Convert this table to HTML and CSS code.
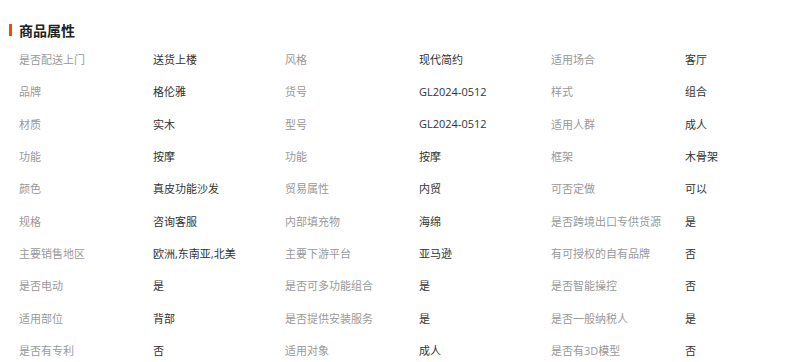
FILE: index.html
```html
<!DOCTYPE html>
<html lang="zh">
<head>
<meta charset="utf-8">
<title>商品属性</title>
<link rel="stylesheet" href="styles.css">
</head>
<body>
<section class="attrs">
  <h3 class="attrs-title">商品属性</h3>
  <div class="attrs-grid">
    <span class="k">是否配送上门</span><span class="v">送货上楼</span>
    <span class="k">风格</span><span class="v">现代简约</span>
    <span class="k">适用场合</span><span class="v">客厅</span>

    <span class="k">品牌</span><span class="v">格伦雅</span>
    <span class="k">货号</span><span class="v">GL2024-0512</span>
    <span class="k">样式</span><span class="v">组合</span>

    <span class="k">材质</span><span class="v">实木</span>
    <span class="k">型号</span><span class="v">GL2024-0512</span>
    <span class="k">适用人群</span><span class="v">成人</span>

    <span class="k">功能</span><span class="v">按摩</span>
    <span class="k">功能</span><span class="v">按摩</span>
    <span class="k">框架</span><span class="v">木骨架</span>

    <span class="k">颜色</span><span class="v">真皮功能沙发</span>
    <span class="k">贸易属性</span><span class="v">内贸</span>
    <span class="k">可否定做</span><span class="v">可以</span>

    <span class="k">规格</span><span class="v">咨询客服</span>
    <span class="k">内部填充物</span><span class="v">海绵</span>
    <span class="k">是否跨境出口专供货源</span><span class="v">是</span>

    <span class="k">主要销售地区</span><span class="v">欧洲,东南亚,北美</span>
    <span class="k">主要下游平台</span><span class="v">亚马逊</span>
    <span class="k">有可授权的自有品牌</span><span class="v">否</span>

    <span class="k">是否电动</span><span class="v">是</span>
    <span class="k">是否可多功能组合</span><span class="v">是</span>
    <span class="k">是否智能操控</span><span class="v">否</span>

    <span class="k">适用部位</span><span class="v">背部</span>
    <span class="k">是否提供安装服务</span><span class="v">是</span>
    <span class="k">是否一般纳税人</span><span class="v">是</span>

    <span class="k">是否有专利</span><span class="v">否</span>
    <span class="k">适用对象</span><span class="v">成人</span>
    <span class="k">是否有3D模型</span><span class="v">否</span>
  </div>
</section>
</body>
</html>
```

FILE: styles.css
```css
html, body {
  margin: 0;
  padding: 0;
  background: #fff;
}

body {
  font-family: "Open Sans", "Noto Sans CJK SC", sans-serif;
  font-size: 11px;
  color: #333;
}

.attrs {
  padding: 16px 0 0 9px;
}

.attrs-title {
  display: flex;
  align-items: center;
  gap: 7px;
  height: 27px;
  margin: 0;
  font-size: 14px;
  font-weight: bold;
  color: #222;
}

.attrs-title::before {
  content: "";
  display: block;
  width: 3px;
  height: 12px;
  background: #ff4400;
}

.attrs-grid {
  display: grid;
  grid-template-columns: 134px 132px 134px 132px 134px 1fr;
  grid-auto-rows: 32.3px;
  align-items: center;
  padding-left: 10px;
}

.k {
  color: #999;
  white-space: nowrap;
}

.v {
  color: #333;
  white-space: nowrap;
}
```
